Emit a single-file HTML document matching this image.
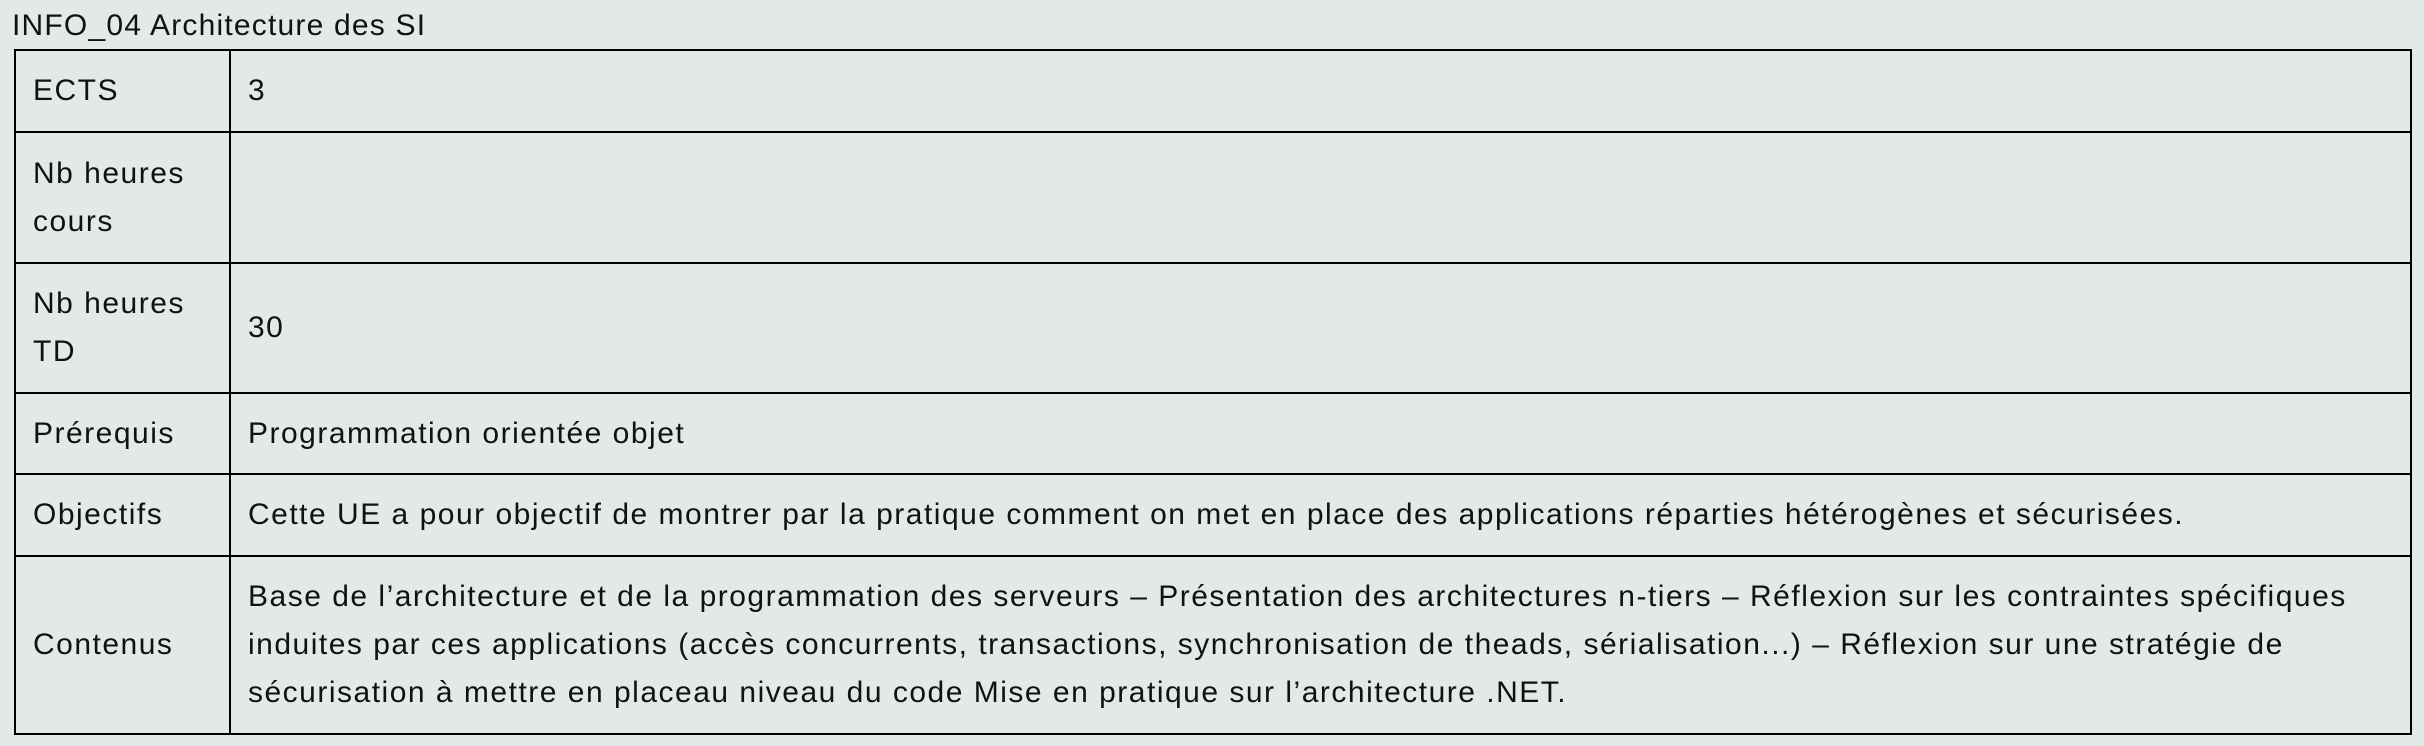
<!DOCTYPE html>
<html><head><meta charset="utf-8"><style>
html,body{margin:0;padding:0;background:#e3e9e7;}
body{width:2424px;height:746px;position:relative;overflow:hidden;font-family:"Liberation Sans",sans-serif;color:#111;font-size:30px;letter-spacing:1.5px;}
.t{position:absolute;left:12px;top:4px;line-height:44px;letter-spacing:1.2px;}
table{position:absolute;left:14px;top:49px;width:2398px;border-collapse:collapse;table-layout:fixed;}
td{border:2px solid #000;padding:0 12px 0 17px;line-height:48px;vertical-align:middle;overflow:hidden;}
</style></head><body>
<div class="t">INFO_04 Architecture des SI</div>
<table>
<colgroup><col style="width:215px"><col></colgroup>
<tr style="height:82px"><td>ECTS</td><td>3</td></tr>
<tr style="height:131px"><td>Nb heures cours</td><td></td></tr>
<tr style="height:130px"><td>Nb heures TD</td><td>30</td></tr>
<tr style="height:81px"><td>Prérequis</td><td>Programmation orientée objet</td></tr>
<tr style="height:82px"><td>Objectifs</td><td>Cette UE a pour objectif de montrer par la pratique comment on met en place des applications réparties hétérogènes et sécurisées.</td></tr>
<tr style="height:178px"><td>Contenus</td><td>Base de l’architecture et de la programmation des serveurs – Présentation des architectures n-tiers – Réflexion sur les contraintes spécifiques<br>induites par ces applications (accès concurrents, transactions, synchronisation de theads, sérialisation...) – Réflexion sur une stratégie de<br>sécurisation à mettre en placeau niveau du code Mise en pratique sur l’architecture .NET.</td></tr>
</table>
</body></html>
